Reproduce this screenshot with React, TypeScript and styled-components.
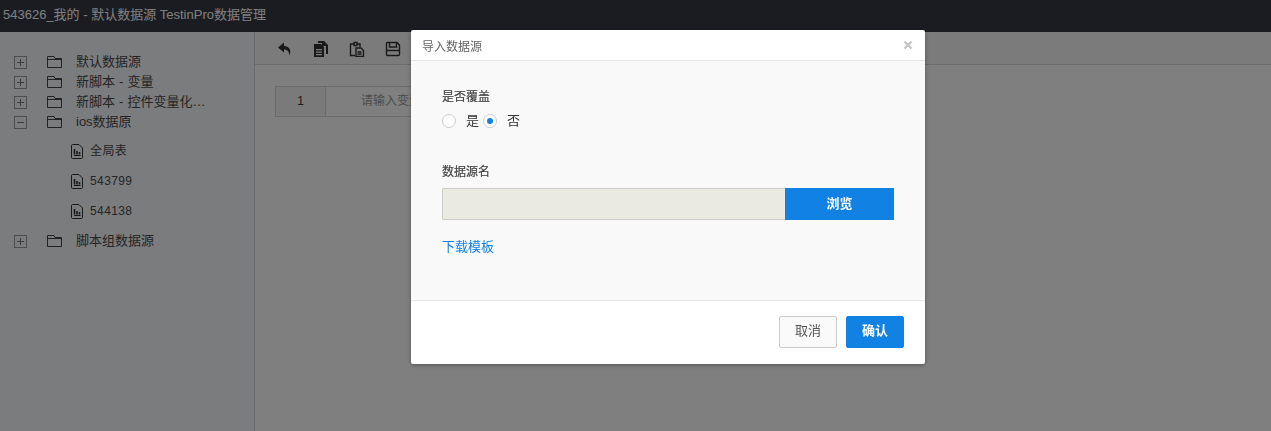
import React from "react";
import styled, { createGlobalStyle } from "styled-components";

const cjk = `"Liberation Sans", "Noto Sans CJK SC", sans-serif`;

const GlobalStyle = createGlobalStyle`
  html, body {
    margin: 0;
    padding: 0;
    height: 100%;
    background: #fff;
    font-family: ${cjk};
  }
  * { box-sizing: border-box; }
`;

const Page = styled.div`
  width: 1271px;
  height: 431px;
  overflow: hidden;
  display: flex;
  flex-direction: column;
`;

const TopBar = styled.header`
  height: 32px;
  flex: none;
  padding-left: 3px;
  background: #343844;
  color: #fff;
  font-size: 13px;
  line-height: 30px;
`;

const Content = styled.div`
  flex: 1;
  display: flex;
  min-height: 0;
`;

const Sidebar = styled.aside`
  width: 255px;
  flex: none;
  padding: 20px 0 0 14px;
  background: #f6f8fb;
  border-right: 1px solid #d3d6dc;
`;

const Row = styled.div`
  height: 20px;
  display: flex;
  align-items: center;
  font-size: 13px;
  line-height: 16px;
  color: #4a4a4a;
`;

const ChildRow = styled(Row)`
  height: 30px;
  padding-left: 57px;
  font-size: 12px;
`;

const Toggle = styled.span`
  width: 13px;
  height: 13px;
  flex: none;
  margin-right: 20px;
  display: flex;
`;

const RowLabel = styled.span`
  margin-left: 14px;
  word-spacing: 0.5px;
`;

const ChildLabel = styled.span`
  margin-left: 7px;
  letter-spacing: 0.4px;
`;

const Children = styled.div`
  padding: 4px 0 5px;
`;

const Main = styled.main`
  flex: 1;
  background: #fff;
`;

const Toolbar = styled.div`
  height: 33px;
  display: flex;
  align-items: center;
  gap: 20px;
  padding: 2px 0 0 22px;
  border-bottom: 1px solid #d8d8d8;
  background: #f7f7f7;
`;

const VarRow = styled.div`
  display: flex;
  margin: 21px 0 0 20px;
  height: 31px;
  width: 300px;
  border: 1px solid #d6d6d6;
  font-size: 12px;
`;

const VarIndex = styled.div`
  width: 50px;
  text-align: center;
  line-height: 28px;
  color: #333;
  background: #f5f5f5;
  border-right: 1px solid #d6d6d6;
`;

const VarInput = styled.div`
  flex: 1;
  padding-left: 35px;
  line-height: 29px;
  color: #999;
`;

const Overlay = styled.div`
  position: fixed;
  inset: 0;
  padding: 30px 0 0 411px;
  background: rgba(0, 0, 0, 0.5);
`;

const Dialog = styled.div`
  width: 514px;
  height: 334px;
  display: flex;
  flex-direction: column;
  background: #fff;
  border-radius: 2px;
  box-shadow: 0 1px 4px rgba(0, 0, 0, 0.35);
`;

const DialogHeader = styled.div`
  height: 31px;
  flex: none;
  display: flex;
  align-items: center;
  justify-content: space-between;
  padding: 0 11px;
  border-bottom: 1px solid #e5e5e5;
  font-size: 12px;
  color: #666;
`;

const Close = styled.span`
  display: flex;
  width: 10px;
  height: 10px;
  margin-right: 1px;
`;

const DialogBody = styled.div`
  flex: 1;
  padding: 28px 31px 0;
  background: #f9f9f9;
`;

const FieldLabel = styled.div`
  font-size: 12px;
  line-height: 16px;
  color: #444;
  -webkit-text-stroke: 0.2px #444;
`;

const RadioGroup = styled.div`
  margin-top: 9px;
  height: 14px;
  display: flex;
  align-items: center;
  font-size: 13px;
  line-height: 14px;
  color: #333;
`;

const Radio = styled.span<{ $checked?: boolean }>`
  width: 14px;
  height: 14px;
  flex: none;
  border-radius: 50%;
  border: 1px solid #ccc;
  background: #fff;
  display: flex;
  align-items: center;
  justify-content: center;
  &::after {
    content: "";
    width: 6px;
    height: 6px;
    border-radius: 50%;
    background: ${(p) => (p.$checked ? "#1182e3" : "transparent")};
  }
`;

const RadioText = styled.span`
  margin: 0 4px 0 10px;
`;

const FileLabel = styled(FieldLabel)`
  margin-top: 36px;
`;

const FileRow = styled.div`
  margin-top: 8px;
  width: 452px;
  height: 32px;
  display: flex;
`;

const FileInput = styled.div`
  flex: 1;
  background: #eaeae2;
  border: 1px solid #ccc;
  border-right: none;
  border-radius: 2px 0 0 2px;
`;

const BrowseButton = styled.button`
  width: 109px;
  border: none;
  padding: 0 0 3px;
  background: #1182e3;
  color: #fff;
  font-family: inherit;
  font-size: 13px;
  font-weight: 700;
`;

const TemplateLink = styled.a`
  display: block;
  margin-top: 19px;
  font-size: 13px;
  line-height: 16px;
  color: #1182e3;
`;

const DialogFooter = styled.div`
  height: 64px;
  flex: none;
  display: flex;
  justify-content: flex-end;
  gap: 9px;
  padding: 15px 21px 0 0;
  border-top: 1px solid #e5e5e5;
`;

const FooterButton = styled.button<{ $primary?: boolean }>`
  width: 58px;
  height: 32px;
  padding: 0 0 6px;
  border-radius: 2px;
  font-family: inherit;
  font-size: 13px;
  font-weight: ${(p) => (p.$primary ? 700 : 400)};
  color: ${(p) => (p.$primary ? "#fff" : "#555")};
  background: ${(p) => (p.$primary ? "#1182e3" : "#fafafa")};
  border: 1px solid ${(p) => (p.$primary ? "#1182e3" : "#ccc")};
`;

const ToggleIcon = ({ open }: { open?: boolean }) => (
  <svg width="13" height="13" viewBox="0 0 13 13" fill="none" stroke="#9c9c9c">
    <rect x="0.5" y="0.5" width="12" height="12" />
    <path d="M3 6.5h7" stroke="#777" />
    {!open && <path d="M6.5 3v7" stroke="#777" />}
  </svg>
);

const FolderIcon = () => (
  <svg width="15" height="12" viewBox="0 0 15 12" fill="none" stroke="#444" style={{ flex: "none" }}>
    <path d="M0.5 11.5V0.5H7L8 2.5H14.5V11.5Z" />
    <path d="M0.5 3.5H14.5" />
  </svg>
);

const SheetIcon = () => (
  <svg width="12" height="15" viewBox="0 0 12 15" fill="none" stroke="#333" style={{ flex: "none" }}>
    <path d="M1.5 0.5H8L11.500 4V13.500a1 1 0 0 1-1 1h-9a1 1 0 0 1-1-1V1.500a1 1 0 0 1 1-1Z" />
    <path d="M3 11.500h6.500" />
    <path d="M3.500 10.500V5M6 10.500V7M8.500 10.500V8" strokeWidth="1.600" />
  </svg>
);

const ToolIcon = ({ d, fill }: { d: string; fill?: boolean }) => (
  <svg width="16" height="16" viewBox="0 0 16 16" fill={fill ? "#333" : "none"} stroke={fill ? "none" : "#333"} strokeWidth="1.400">
    <path d={d} />
  </svg>
);

const tree: { label: string; open?: boolean; children?: string[] }[] = [
  { label: "默认数据源" },
  { label: "新脚本 - 变量" },
  { label: "新脚本 - 控件变量化…" },
  { label: "ios数据原", open: true, children: ["全局表", "543799", "544138"] },
  { label: "脚本组数据源" },
];

export default function App() {
  return (
    <Page>
      <GlobalStyle />
      <TopBar>543626_我的 - 默认数据源 TestinPro数据管理</TopBar>
      <Content>
        <Sidebar>
          {tree.map((item) => (
            <React.Fragment key={item.label}>
              <Row>
                <Toggle>
                  <ToggleIcon open={item.open} />
                </Toggle>
                <FolderIcon />
                <RowLabel>{item.label}</RowLabel>
              </Row>
              {item.children && (
                <Children>
                  {item.children.map((child) => (
                    <ChildRow key={child}>
                      <SheetIcon />
                      <ChildLabel>{child}</ChildLabel>
                    </ChildRow>
                  ))}
                </Children>
              )}
            </React.Fragment>
          ))}
        </Sidebar>
        <Main>
          <Toolbar>
            <ToolIcon fill d="M7 1.500 1 6.500l6 5V8.500c3 0 5 1.500 5.500 6 2-5 .5-9-5.500-9.500Z" />
            <ToolIcon fill d="M5 0h6l4 4v9h-2V5H9V2H5ZM1 3h7l3 3v10H1Zm2 5v1.200h6V8Zm0 2.500v1.200h6v-1.200Zm0 2.500v1.200h6V13Z" />
            <ToolIcon d="M5 3H1.500v11.500H6M11 6V3H8M5 4.500V1.500h3v3ZM7 7h5l2.500 2.500v6H7Zm1.500 4h4m-4 2h4" />
            <ToolIcon d="M2.500 1.500h9.500l2.500 2.500v9.500a1 1 0 0 1-1 1h-11a1 1 0 0 1-1-1v-11a1 1 0 0 1 1-1ZM4.500 1.500v4.500h7V1.500M1.500 9.500h13" />
          </Toolbar>
          <VarRow>
            <VarIndex>1</VarIndex>
            <VarInput>请输入变量名</VarInput>
          </VarRow>
        </Main>
      </Content>
      <Overlay>
        <Dialog>
          <DialogHeader>
            导入数据源
            <Close>
              <svg width="10" height="10" viewBox="0 0 10 10" stroke="#c4c4c4" strokeWidth="2.400">
                <path d="M1.500 1.500l7 7m0-7l-7 7" />
              </svg>
            </Close>
          </DialogHeader>
          <DialogBody>
            <FieldLabel>是否覆盖</FieldLabel>
            <RadioGroup>
              <Radio />
              <RadioText>是</RadioText>
              <Radio $checked />
              <RadioText>否</RadioText>
            </RadioGroup>
            <FileLabel>数据源名</FileLabel>
            <FileRow>
              <FileInput />
              <BrowseButton>浏览</BrowseButton>
            </FileRow>
            <TemplateLink>下载模板</TemplateLink>
          </DialogBody>
          <DialogFooter>
            <FooterButton>取消</FooterButton>
            <FooterButton $primary>确认</FooterButton>
          </DialogFooter>
        </Dialog>
      </Overlay>
    </Page>
  );
}
